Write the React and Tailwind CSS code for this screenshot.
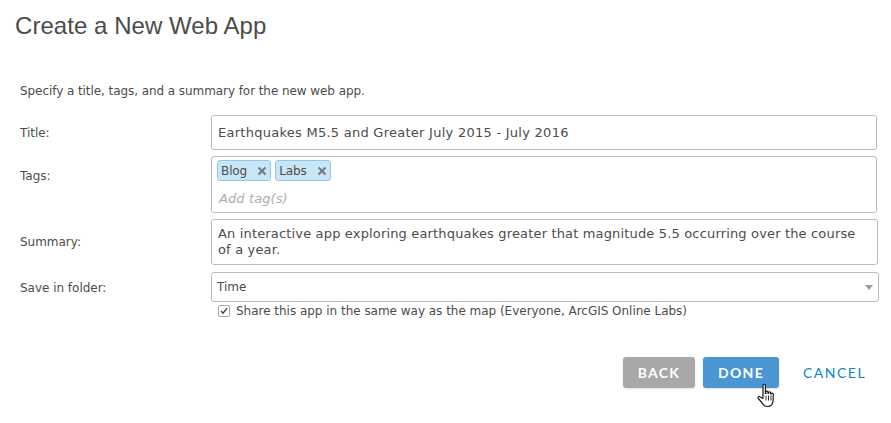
import React from 'react';

const Tag = ({ label }) => (
  <span className="flex h-[21px] items-center gap-[10px] rounded-[3px] border border-[#8fc8ea] bg-[#c9e6f7] pl-[3px] pr-[3px] text-[12px] tracking-[-0.1px] text-[#4c4c4c]">
    {label}
    <svg width="10" height="10" viewBox="0 0 10 10" className="text-[#6e7479]">
      <path d="M1.5 1.5l7 7M8.5 1.5l-7 7" stroke="currentColor" strokeWidth="1.8" fill="none" />
    </svg>
  </span>
);

const Row = ({ label, className, labelClass = '', children, top }) => (
  <div className={`flex ${top ? 'items-start' : 'items-center'} ${className}`}>
    <label className={`w-[191px] shrink-0 ${labelClass}`}>{label}</label>
    {children}
  </div>
);

const App = () => {
  return (
    <div className="h-[423px] w-[891px] overflow-hidden bg-white font-['DejaVu_Sans',sans-serif] text-[12px] tracking-[-0.02px] text-[#4c4c4c]">
      <h1 className="pl-[15px] pt-[12px] font-['Liberation_Sans',sans-serif] text-[24px] leading-[28px] tracking-[0.05px] text-[#4c4c4c]">
        Create a New Web App
      </h1>

      <div className="pl-[20px]">
        <p className="mt-[43px] leading-[16px] tracking-[-0.07px]">Specify a title, tags, and a summary for the new web app.</p>

        <Row label="Title:" className="mt-[16px]">
          <div className="flex h-[35px] w-[666px] items-center rounded-[3px] border border-[#bcbcbc] pl-[6px] text-[13px] tracking-[0.26px]">
            Earthquakes M5.5 and Greater July 2015 - July 2016
          </div>
        </Row>

        <Row label="Tags:" className="mt-[6px]" labelClass="pt-[11px]" top>
          <div className="h-[57px] w-[666px] rounded-[3px] border border-[#bcbcbc] pl-[5px] pt-[3px]">
            <div className="flex gap-[4px]">
              <Tag label="Blog" />
              <Tag label="Labs" />
            </div>
            <div className="mt-[10px] pl-[2px] text-[13px] italic leading-[16px] tracking-[0.1px] text-[#adadad]">Add tag(s)</div>
          </div>
        </Row>

        <Row label="Summary:" className="mt-[6px]">
          <div className="h-[46px] w-[667px] rounded-[3px] border border-[#bcbcbc] pl-[6px] pr-[10px] pt-[6px] text-[13px] leading-[16px] tracking-[0.16px]">
            An interactive app exploring earthquakes greater that magnitude 5.5 occurring over the course of a year.
          </div>
        </Row>

        <Row label="Save in folder:" className="mt-[7px]" labelClass="pt-[1px]">
          <div className="flex h-[30px] w-[668px] items-center justify-between rounded-[3px] border border-[#bcbcbc] pl-[5px] pr-[5px]">
            Time
            <span className="mt-[1px] h-0 w-0 border-x-[4px] border-t-[5px] border-x-transparent border-t-[#999999]" />
          </div>
        </Row>

        <div className="ml-[198px] mt-[1px] flex h-[16px] items-center gap-[6px]">
          <span className="flex h-[12px] w-[12px] items-center justify-center rounded-[2px] border border-[#a8a8a8] bg-white">
            <svg width="8" height="8" viewBox="0 0 8 8">
              <path d="M1 4l2 2.2L7 1.2" stroke="#444444" strokeWidth="1.4" fill="none" />
            </svg>
          </span>
          Share this app in the same way as the map (Everyone, ArcGIS Online Labs)
        </div>
      </div>

      <div className="mt-[38px] flex items-center pl-[623px] font-['Lato',sans-serif] text-[14px] font-bold tracking-[1.3px]">
        <button className="h-[31px] w-[72px] rounded-[3px] bg-[#a8a8a8] text-white shadow-sm">BACK</button>
        <div className="relative ml-[8px]">
          <button className="h-[31px] w-[76px] rounded-[3px] bg-[#4a96d3] text-white shadow-sm">DONE</button>
          <svg width="20" height="26" viewBox="0 0 20 26" className="absolute left-[54px] top-[26px]">
            <path
              d="M6 2.5c0-1.7 2.4-1.7 2.4 0v8h.4V9c0-1.3 2.2-1.3 2.2 0v1.5h.4V9.8c0-1.2 2.2-1.2 2.2 0v1.2h.4c0-1.2 2.2-1.2 2.2 0v6c0 2.4-.8 3.6-1.6 4.8-1 1.4-2.4 1.7-4.2 1.7-2 0-3.2-.6-4.3-2.2-1.2-1.7-3-3.8-4.8-5.8-1-1.3.8-2.8 2-1.6L6 15.4z"
              fill="#ffffff"
              stroke="#1a1a1a"
              strokeWidth="1.2"
              strokeLinejoin="round"
            />
            <path d="M9 12.5v5M11.5 12.5v5M14 12.5v5" stroke="#1a1a1a" strokeWidth="0.9" />
          </svg>
        </div>
        <button className="ml-[24px] font-normal tracking-[1.5px] text-[#0f84c8]">CANCEL</button>
      </div>
    </div>
  );
};

export default App;
